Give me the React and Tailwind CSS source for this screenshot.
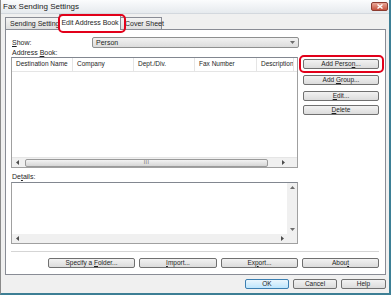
import React from 'react';

function Btn({ children, w, primary }) {
  return (
    <div
      className={`h-[10px] flex items-center justify-center rounded-[2px] border text-[6.5px] leading-none text-[#1e1e1e] ${
        primary
          ? 'border-[#3c7fb1] bg-linear-to-b from-[#eaf6fd] to-[#bee6fd]'
          : 'border-[#707070] bg-linear-to-b from-[#f2f2f2] to-[#dcdcdc]'
      } ${w}`}
    >
      <span className="whitespace-pre">{children}</span>
    </div>
  );
}

function ArrowLeft() {
  return (
    <svg width="4" height="5" viewBox="0 0 4 5"><path d="M3 0 L0 2.5 L3 5 Z" fill="#4d4d4d" /></svg>
  );
}
function ArrowRight() {
  return (
    <svg width="4" height="5" viewBox="0 0 4 5"><path d="M1 0 L4 2.5 L1 5 Z" fill="#4d4d4d" /></svg>
  );
}
function ArrowUp() {
  return (
    <svg width="5" height="3" viewBox="0 0 5 3"><path d="M0 3 L2.5 0 L5 3 Z" fill="#6d6d6d" /></svg>
  );
}
function ArrowDown() {
  return (
    <svg width="5" height="3" viewBox="0 0 5 3"><path d="M0 0 L2.5 3 L5 0 Z" fill="#6d6d6d" /></svg>
  );
}

const columns = [
  { label: 'Destination Name', w: 'w-[61px]' },
  { label: 'Company', w: 'w-[61px]' },
  { label: 'Dept./Div.', w: 'w-[61px]' },
  { label: 'Fax Number', w: 'w-[62px]' },
  { label: 'Description', w: 'w-[37px]' },
];

export default function App() {
  return (
    <div className="relative w-[391px] h-[295px] overflow-hidden bg-[#f0f0f0] border-l border-l-[#8a8a8a] border-r-2 border-r-[#3d7f95] border-b-2 border-b-[#3d7f95] font-['Liberation_Sans',Arial,sans-serif] text-[#1e1e1e]">
      {/* title bar */}
      <div className="h-[14px] flex items-center justify-between pl-[2px] pr-[1px] bg-linear-to-b from-[#fbfcfd] to-[#e6eaee] border-b border-[#d3d8de]">
        <span className="text-[8px] leading-none text-[#222]">Fax Sending Settings</span>
        <div className="w-[17px] h-[9px] flex items-center justify-center rounded-[2px] border border-[#8c3b30] bg-linear-to-b from-[#e9a697] to-[#c4503d]">
          <svg width="6" height="5" viewBox="0 0 6 5">
            <path d="M0.5 0.5 L5.5 4.5 M5.5 0.5 L0.5 4.5" stroke="#fff" strokeWidth="1.4" />
          </svg>
        </div>
      </div>

      {/* tabs */}
      <div className="relative flex items-end h-[15px] ml-[4px]">
        <div className="w-[54px] h-[12px] flex items-center pl-[4px] border border-b-0 border-[#898c95] bg-linear-to-b from-[#f4f4f4] to-[#dedede] text-[7px] leading-none whitespace-nowrap overflow-hidden">
          Sending Setting
        </div>
        <div className="relative z-10 w-[62px] h-[16px] -mb-[1px] flex items-center justify-center border border-b-0 border-[#898c95] bg-white text-[7px] leading-none whitespace-nowrap">
          Edit Address Book
        </div>
        <div className="w-[41px] h-[12px] flex items-center pl-[4px] border border-b-0 border-l-0 border-[#898c95] bg-linear-to-b from-[#f4f4f4] to-[#dedede] text-[7px] leading-none whitespace-nowrap">
          Cover Sheet
        </div>
        <div className="absolute z-20 left-[53px] top-0 w-[68px] h-[19px] rounded-[5px] border-2 border-[#e2001a]" />
      </div>

      {/* panel */}
      <div className="ml-[4px] w-[381px] h-[246px] border border-[#898c95] bg-white text-[7px] leading-none">
        <div className="flex items-center h-[11px] mt-[7px]">
          <div className="w-[86px] pl-[6px]"><span className="underline">S</span>how:</div>
          <div className="w-[207px] h-[11px] flex items-center justify-between px-[3px] rounded-[2px] border border-[#8e8f8f] bg-linear-to-b from-[#f2f2f2] to-[#dcdcdc]">
            <span>Person</span>
            <ArrowDown />
          </div>
        </div>
        <div className="h-[8px] ml-[6px] mt-[1px]">
          <span className="whitespace-pre">Address <span className="underline">B</span>ook:</span>
        </div>

        <div className="flex">
          {/* list */}
          <div className="ml-[5px] w-[287px] h-[111px] flex flex-col border border-[#a0a0a0] border-t-[#828790]">
            <div className="h-[14px] flex border-b border-[#e5e5e5]">
              {columns.map((c) => (
                <div key={c.label} className={`${c.w} flex items-center pl-[4px] border-r border-[#e5e5e5] text-[6.5px] whitespace-nowrap overflow-hidden`}>
                  {c.label}
                </div>
              ))}
            </div>
            <div className="flex-1" />
            <div className="h-[10px] flex items-center bg-[#f0f0f0] border-t border-[#e5e5e5]">
              <div className="w-[12px] flex justify-center"><ArrowLeft /></div>
              <div className="ml-[1px] w-[243px] h-[8px] flex items-center justify-center rounded-[2px] border border-[#9a9a9a] bg-linear-to-b from-[#f3f3f3] to-[#d6d6d6] text-[5px] tracking-[0.5px] text-[#555]">
                III
              </div>
              <div className="flex-1 flex justify-center"><ArrowRight /></div>
            </div>
          </div>

          {/* side buttons */}
          <div className="ml-[5px] flex flex-col">
            <Btn w="w-[76px] mt-[2px]">Add Perso<span className="underline">n</span>...</Btn>
            <Btn w="w-[76px] mt-[6px]">Add <span className="underline">G</span>roup...</Btn>
            <Btn w="w-[76px] mt-[6px]"><span className="underline">E</span>dit...</Btn>
            <Btn w="w-[76px] mt-[4px]"><span className="underline">D</span>elete</Btn>
          </div>
        </div>

        <div className="h-[8px] ml-[6px] mt-[4px] flex items-center">De<span className="underline">t</span>ails:</div>

        {/* details box */}
        <div className="ml-[5px] mt-[2px] w-[287px] h-[62px] flex flex-col border border-[#a0a0a0] border-t-[#828790]">
          <div className="flex-1 flex">
            <div className="flex-1" />
            <div className="w-[10px] flex flex-col items-center justify-between py-[3px] bg-[#f0f0f0]">
              <ArrowUp />
              <ArrowDown />
            </div>
          </div>
          <div className="h-[9px] flex items-center bg-[#f0f0f0]">
            <div className="w-[12px] flex justify-center"><ArrowLeft /></div>
            <div className="flex-1" />
            <div className="w-[10px] flex justify-center"><ArrowRight /></div>
            <div className="w-[10px] h-full bg-[#f0f0f0]" />
          </div>
        </div>

        <div className="ml-[5px] mt-[7px] w-[368px] h-[1px] bg-[#d5d5d5]" />

        <div className="flex gap-[4px] ml-[42px] mt-[6px]">
          <Btn w="w-[87px]">Specify a <span className="underline">F</span>older...</Btn>
          <Btn w="w-[78px]"><span className="underline">I</span>mport...</Btn>
          <Btn w="w-[77px]">Ex<span className="underline">p</span>ort...</Btn>
          <Btn w="w-[77px]">Abou<span className="underline">t</span></Btn>
        </div>
      </div>

      {/* dialog buttons */}
      <div className="flex justify-end gap-[4px] pr-[3px] mt-[4px]">
        <Btn w="w-[44px]" primary>OK</Btn>
        <Btn w="w-[44px]">Cancel</Btn>
        <Btn w="w-[45px]">Help</Btn>
      </div>

      {/* highlight around Add Person */}
      <div className="absolute left-[298px] top-[55px] w-[85px] h-[18px] rounded-[5px] border-2 border-[#e2001a]" />
    </div>
  );
}
